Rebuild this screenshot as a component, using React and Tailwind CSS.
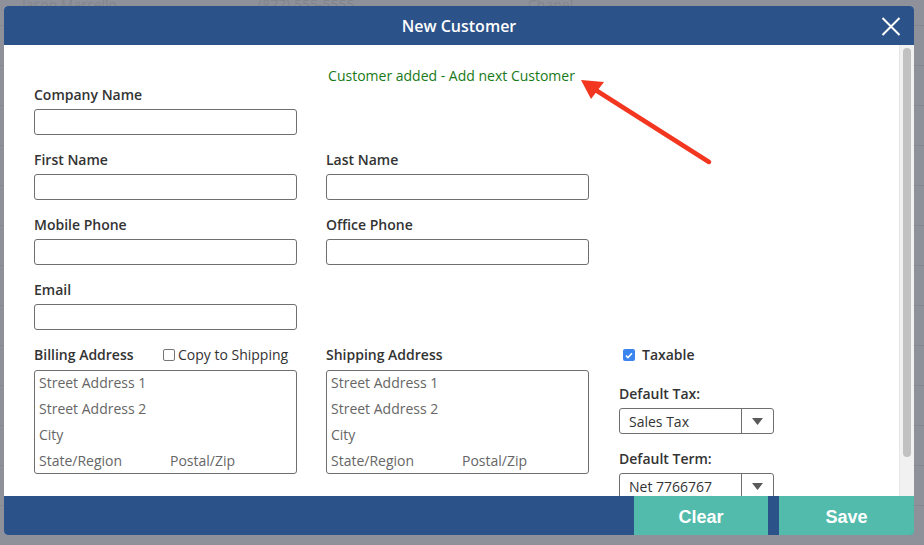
import React from "react";

const Field = ({ label, className = "" }) => (
  <div className={`w-[263px] ${className}`}>
    <div className="text-[14px] leading-5 font-semibold text-[#333]">{label}</div>
    <div className="mt-1 h-[26px] border border-[#6f6f6f] rounded-[3px] bg-white" />
  </div>
);

const AddressBox = () => (
  <div className="mt-[5px] h-[104px] border border-[#6f6f6f] rounded-[3px] px-1 text-[14px] leading-[26px] text-[#666]">
    <div className="-mt-px">Street Address 1</div>
    <div>Street Address 2</div>
    <div>City</div>
    <div className="flex">
      <span className="w-[131px]">State/Region</span>
      <span>Postal/Zip</span>
    </div>
  </div>
);

const Select = ({ value }) => (
  <div className="mt-1 w-[155px] h-[26px] flex border border-[#6f6f6f] rounded-[3px] bg-white">
    <div className="flex-1 pl-[9px] text-[14px] leading-[25px] text-[#333]">{value}</div>
    <div className="w-[32px] border-l border-[#6f6f6f] flex items-center justify-center">
      <svg width="11" height="7" viewBox="0 0 11 7">
        <path d="M0 0 L11 0 L5.5 7 Z" fill="#5a5a5a" />
      </svg>
    </div>
  </div>
);

const BackgroundRows = () => (
  <div className="flex flex-col">
    <div className="h-[30px] flex text-[14px] leading-5 text-[#83868d] -mt-[5px]">
      <span className="ml-[22px] w-[236px]">Jason Marcello</span>
      <span className="w-[270px]">(877) 555-5555</span>
      <span>Chanel</span>
    </div>
    {Array.from({ length: 13 }).map((_, i) => (
      <div key={i} className="h-[40px] border-t border-[#85888f]" />
    ))}
  </div>
);

export default function App() {
  return (
    <div className="relative h-[545px] w-[924px] overflow-hidden bg-[#8e9199] font-['Open_Sans',sans-serif]">
      <BackgroundRows />

      <div className="absolute top-[6px] left-[4px] w-[910px] h-[529px] flex flex-col rounded-[4px] overflow-hidden bg-white">
        <div className="h-[39px] shrink-0 bg-[#2b5289] flex items-center justify-center relative">
          <span className="text-white text-[16px] font-semibold">New Customer</span>
          <svg className="absolute right-[13px] top-[11px]" width="20" height="19" viewBox="0 0 20 19">
            <path d="M1.5 1 L18.5 18 M18.5 1 L1.5 18" stroke="white" strokeWidth="2" />
          </svg>
        </div>

        <div className="h-[451px] flex overflow-hidden">
          <div className="flex-1 pl-[30px]">
            <div className="mt-[21px] h-5 text-center text-[14px] leading-5 text-[#187a17] pr-[30px]">
              Customer added - Add next Customer
            </div>

            <div className="-mt-px">
              <Field label="Company Name" />
              <div className="flex mt-[15px]">
                <Field label="First Name" />
                <Field label="Last Name" className="ml-[29px]" />
              </div>
              <div className="flex mt-[15px]">
                <Field label="Mobile Phone" />
                <Field label="Office Phone" className="ml-[29px]" />
              </div>
              <Field label="Email" className="mt-[15px]" />

              <div className="flex mt-[15px]">
                <div className="w-[263px]">
                  <div className="flex items-center text-[14px] leading-5">
                    <span className="w-[129px] font-semibold text-[#333]">Billing Address</span>
                    <span className="w-[12px] h-[12px] border border-[#767676] rounded-[2px] bg-white" />
                    <span className="ml-[3px] text-[#333]">Copy to Shipping</span>
                  </div>
                  <AddressBox />
                </div>

                <div className="w-[263px] ml-[29px]">
                  <div className="text-[14px] leading-5 font-semibold text-[#333]">Shipping Address</div>
                  <AddressBox />
                </div>

                <div className="ml-[30px]">
                  <div className="flex items-center text-[14px] leading-5">
                    <span className="ml-[4px] w-[12px] h-[12px] rounded-[2px] bg-[#3a86ee] flex items-center justify-center">
                      <svg width="8" height="7" viewBox="0 0 8 7">
                        <path d="M1 3.6 L3 5.6 L7 1.2" stroke="white" strokeWidth="1.5" fill="none" />
                      </svg>
                    </span>
                    <span className="ml-[7px] font-semibold text-[#333]">Taxable</span>
                  </div>
                  <div className="mt-[19px] text-[14px] leading-5 font-semibold text-[#333]">Default Tax:</div>
                  <Select value="Sales Tax" />
                  <div className="mt-[15px] text-[14px] leading-5 font-semibold text-[#333]">Default Term:</div>
                  <Select value="Net 7766767" />
                </div>
              </div>
            </div>
          </div>

          <div className="w-[15px] shrink-0 bg-[#f1f1f1] border-l border-[#e6e6e6] pt-[3px] pl-[3px]">
            <div className="w-[8px] h-[409px] rounded-full bg-[#c1c1c1]" />
          </div>
        </div>

        <div className="h-[39px] shrink-0 bg-[#2b5289] flex justify-end">
          <div className="w-[134px] pt-[3px] bg-[#52bbab] flex items-center justify-center text-white text-[18px] font-bold font-['Liberation_Sans',Arial,sans-serif]">
            Clear
          </div>
          <div className="w-[135px] pt-[3px] ml-[11px] bg-[#52bbab] flex items-center justify-center text-white text-[18px] font-bold font-['Liberation_Sans',Arial,sans-serif]">
            Save
          </div>
        </div>
      </div>

      <svg className="absolute left-0 top-0 pointer-events-none" width="924" height="545" viewBox="0 0 924 545">
        <line x1="709" y1="162" x2="594" y2="89" stroke="#f2361f" strokeWidth="4.5" strokeLinecap="round" />
        <path d="M581 80 L604 82 L591 99 Z" fill="#f2361f" />
      </svg>
    </div>
  );
}
